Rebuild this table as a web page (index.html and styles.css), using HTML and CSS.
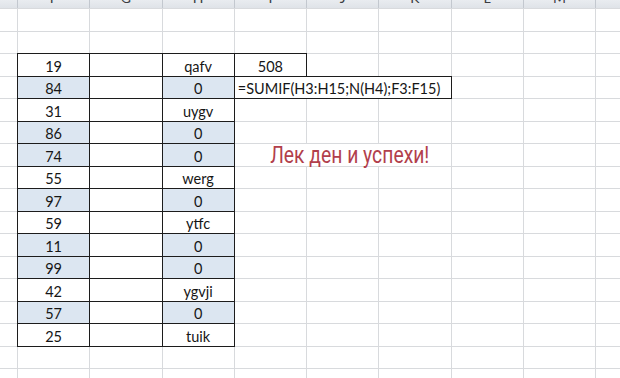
FILE: index.html
```html
<!DOCTYPE html>
<html>
<head>
<meta charset="utf-8">
<link rel="stylesheet" href="styles.css">
</head>
<body>
<div class="sheet">
  <div class="h"></div><div class="h"><span>F</span></div><div class="h"><span>G</span></div><div class="h"><span>H</span></div><div class="h"><span>I</span></div><div class="h"><span>J</span></div><div class="h"><span>K</span></div><div class="h"><span>L</span></div><div class="h"><span>M</span></div><div class="h"></div>

  <div class="c"></div><div class="c"></div><div class="c"></div><div class="c"></div><div class="c"></div><div class="c"></div><div class="c"></div><div class="c"></div><div class="c"></div><div class="c"></div>
  <div class="c"></div><div class="c"></div><div class="c"></div><div class="c"></div><div class="c"></div><div class="c"></div><div class="c"></div><div class="c"></div><div class="c"></div><div class="c"></div>

  <div class="c"></div><div class="c b">19</div><div class="c b"></div><div class="c b">qafv</div><div class="c b">508</div><div class="c"></div><div class="c"></div><div class="c"></div><div class="c"></div><div class="c"></div>
  <div class="c"></div><div class="c b blue">84</div><div class="c b"></div><div class="c b blue">0</div><div class="c b formula">=SUMIF(H3:H15;N(H4);F3:F15)</div><div class="c"></div><div class="c"></div><div class="c"></div>
  <div class="c"></div><div class="c b">31</div><div class="c b"></div><div class="c b">uygv</div><div class="c"></div><div class="c"></div><div class="c"></div><div class="c"></div><div class="c"></div><div class="c"></div>
  <div class="c"></div><div class="c b blue">86</div><div class="c b"></div><div class="c b blue">0</div><div class="c"></div><div class="c"></div><div class="c"></div><div class="c"></div><div class="c"></div><div class="c"></div>
  <div class="c"></div><div class="c b blue">74</div><div class="c b"></div><div class="c b blue">0</div><div class="c note"><span>Лек ден и успехи!</span></div><div class="c"></div><div class="c"></div><div class="c"></div>
  <div class="c"></div><div class="c b">55</div><div class="c b"></div><div class="c b">werg</div><div class="c"></div><div class="c"></div><div class="c"></div><div class="c"></div><div class="c"></div><div class="c"></div>
  <div class="c"></div><div class="c b blue">97</div><div class="c b"></div><div class="c b blue">0</div><div class="c"></div><div class="c"></div><div class="c"></div><div class="c"></div><div class="c"></div><div class="c"></div>
  <div class="c"></div><div class="c b">59</div><div class="c b"></div><div class="c b">ytfc</div><div class="c"></div><div class="c"></div><div class="c"></div><div class="c"></div><div class="c"></div><div class="c"></div>
  <div class="c"></div><div class="c b blue">11</div><div class="c b"></div><div class="c b blue">0</div><div class="c"></div><div class="c"></div><div class="c"></div><div class="c"></div><div class="c"></div><div class="c"></div>
  <div class="c"></div><div class="c b blue">99</div><div class="c b"></div><div class="c b blue">0</div><div class="c"></div><div class="c"></div><div class="c"></div><div class="c"></div><div class="c"></div><div class="c"></div>
  <div class="c"></div><div class="c b">42</div><div class="c b"></div><div class="c b">ygvji</div><div class="c"></div><div class="c"></div><div class="c"></div><div class="c"></div><div class="c"></div><div class="c"></div>
  <div class="c"></div><div class="c b blue">57</div><div class="c b"></div><div class="c b blue">0</div><div class="c"></div><div class="c"></div><div class="c"></div><div class="c"></div><div class="c"></div><div class="c"></div>
  <div class="c"></div><div class="c b">25</div><div class="c b"></div><div class="c b">tuik</div><div class="c"></div><div class="c"></div><div class="c"></div><div class="c"></div><div class="c"></div><div class="c"></div>

  <div class="c"></div><div class="c"></div><div class="c"></div><div class="c"></div><div class="c"></div><div class="c"></div><div class="c"></div><div class="c"></div><div class="c"></div><div class="c"></div>
  <div class="c"></div><div class="c"></div><div class="c"></div><div class="c"></div><div class="c"></div><div class="c"></div><div class="c"></div><div class="c"></div><div class="c"></div><div class="c"></div>
</div>
</body>
</html>
```

FILE: styles.css
```css
html, body {
  margin: 0;
  padding: 0;
  background: #ffffff;
  overflow: hidden;
  width: 620px;
  height: 378px;
}

.sheet {
  display: grid;
  grid-template-columns: 17px repeat(8, 71.25px) 60px;
  grid-template-rows: 8px repeat(17, 21.5px);
  gap: 1px;
  background: #d8dadd;
  width: 700px;
  font-family: Lato, "Liberation Sans", sans-serif;
  font-size: 14.5px;
  color: #161616;
}

.h {
  background: linear-gradient(#e9ecf0, #dfe3e8);
  box-shadow: 1px 0 0 #c3c8cf;
  overflow: hidden;
  display: flex;
  justify-content: center;
  color: #3a3d42;
  font-size: 14px;
}

.h span {
  display: block;
  line-height: 14px;
  margin-top: -9px;
}

.c {
  background: #ffffff;
  display: flex;
  justify-content: center;
  align-items: flex-end;
  line-height: 16px;
  padding-bottom: 1px;
  white-space: nowrap;
}

.b {
  outline: 1px solid #1c1c1c;
}

.blue {
  background: #dce6f1;
}

.formula {
  grid-column: span 3;
  justify-content: flex-start;
  padding-left: 3px;
}

.note {
  grid-column: span 3;
  position: relative;
  z-index: 1;
  padding-left: 14px;
}

.note span {
  display: block;
  font-family: Roboto, "Noto Sans", sans-serif;
  font-weight: 400;
  font-size: 23px;
  line-height: 24px;
  margin-bottom: -3px;
  color: #b23f4c;
  transform: scaleX(0.84);
}
```
